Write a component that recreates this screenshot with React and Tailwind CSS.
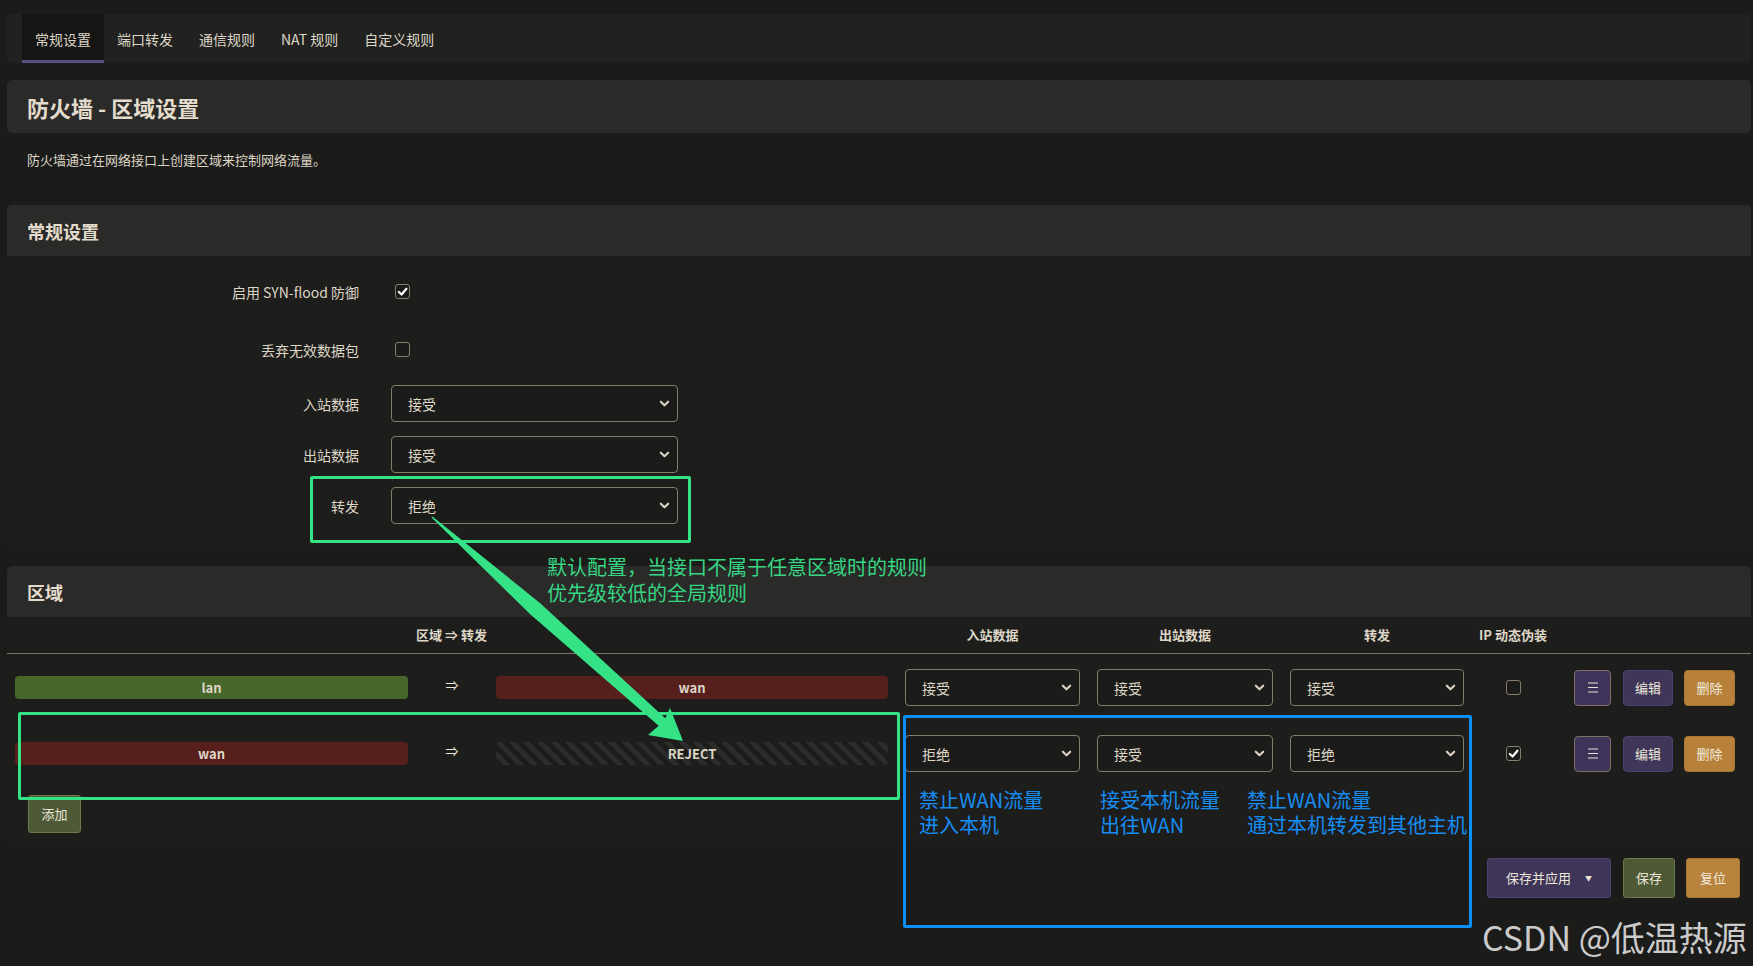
import React from "react"

const font = "font-['Noto_Sans_CJK_SC','Noto_Sans',sans-serif]"

function Chevron() {
  return (
    <svg width="11" height="11" viewBox="0 0 12 12" className="shrink-0">
      <path d="M2 4 L6 8 L10 4" fill="none" stroke="#d8d0c0" strokeWidth="2.4" strokeLinecap="round" strokeLinejoin="round" />
    </svg>
  )
}

function Select({ value, className = "" }) {
  return (
    <div className={`h-[37px] flex items-center justify-between pl-[16px] pr-[7px] rounded-[4px] border border-[#857b6b] bg-[#1b1b1a] text-[14px] leading-[18px] text-[#ddd6c6] ${className}`}>
      <span>{value}</span>
      <Chevron />
    </div>
  )
}

function Checkbox({ checked }) {
  return (
    <div className="w-[15px] h-[15px] rounded-[3px] border-[1.5px] border-[#887d6c] bg-[#1b1b1a] flex items-center justify-center">
      {checked && (
        <svg width="11" height="11" viewBox="0 0 12 12">
          <path d="M2 6.5 L5 9.3 L10.3 3" fill="none" stroke="#ffffff" strokeWidth="2.4" strokeLinecap="round" strokeLinejoin="round" />
        </svg>
      )}
    </div>
  )
}

function MenuIcon() {
  return (
    <svg width="12" height="11" viewBox="0 0 12 11">
      <path d="M1 1 H11 M1 5.5 H11 M1 10 H11" stroke="#e8e2d6" strokeWidth="1.2" />
    </svg>
  )
}

function ZoneRow({ src, srcColor, dest, inbound, outbound, forward, masq }) {
  return (
    <div className="h-[37px] flex items-center">
      <div className={`ml-[8px] w-[393px] h-[23px] rounded-[4px] flex items-center justify-center text-[13px] font-semibold leading-[16px] text-[#ddd6c6] ${srcColor}`}>
        {src}
      </div>
      <div className="w-[88px] text-center text-[13px] leading-[16px] text-[#ece6da] -mt-[6px]">⇒</div>
      {dest === "REJECT" ? (
        <div className="w-[392px] h-[23px] rounded-[4px] flex items-center justify-center text-[13px] font-bold leading-[16px] text-[#ddd6c6] bg-[repeating-linear-gradient(45deg,#1c1c1b_0px,#1c1c1b_5px,#2c2c2b_5px,#2c2c2b_10px)]">
          REJECT
        </div>
      ) : (
        <div className="w-[392px] h-[23px] rounded-[4px] flex items-center justify-center text-[13px] font-semibold leading-[16px] text-[#ddd6c6] bg-[#561f1c]">
          {dest}
        </div>
      )}
      <Select value={inbound} className="ml-[17px] w-[175px]" />
      <Select value={outbound} className="ml-[17px] w-[176px]" />
      <Select value={forward} className="ml-[17px] w-[174px]" />
      <div className="w-[98px] flex justify-center">
        <Checkbox checked={masq} />
      </div>
      <button className="ml-[12px] w-[37px] h-[36px] rounded-[4px] border border-[#7b7063] bg-[#3e3459] flex items-center justify-center">
        <MenuIcon />
      </button>
      <button className="ml-[12px] w-[50px] h-[36px] rounded-[4px] border border-[#4b4170] bg-[#3f3659] text-[13px] leading-[16px] text-[#ece6da]">
        编辑
      </button>
      <button className="ml-[11px] w-[51px] h-[36px] rounded-[4px] border border-[#a87535] bg-[#b7813a] text-[13px] leading-[16px] text-[#f2ebdd]">
        删除
      </button>
    </div>
  )
}

function FormRow({ label, children, className = "" }) {
  return (
    <div className={`h-[37px] flex items-center ${className}`}>
      <div className="w-[352px] text-right text-[14px] leading-[18px] text-[#ddd6c6]">{label}</div>
      <div className="ml-[32px] flex items-center">{children}</div>
    </div>
  )
}

export default function App() {
  const tabs = ["常规设置", "端口转发", "通信规则", "NAT 规则", "自定义规则"]

  return (
    <div className={`relative h-[966px] w-full overflow-hidden bg-[#1b1b1a] pl-[7px] pr-[2px] pt-[14px] ${font}`}>
      {/* Tabs */}
      <div className="h-[49px] rounded-[5px] bg-[#212120] flex pl-[15px]">
        {tabs.map((t, i) => (
          <div
            key={t}
            className={`px-[13px] flex items-center text-[14px] leading-[18px] text-[#ddd6c6] ${i === 0 ? "bg-[#151514] border-b-[3px] border-[#5a4f80] pt-[3px]" : ""}`}
          >
            {t}
          </div>
        ))}
      </div>

      {/* Title */}
      <div className="mt-[17px] h-[53px] rounded-[5px] bg-[#2a2a29] px-[20px] flex items-center text-[22px] font-bold leading-[26px] text-[#e3dccc]">
        防火墙 - 区域设置
      </div>
      <div className="h-[72px] px-[20px] pt-[18px] text-[13px] leading-[18px] text-[#ddd6c6]">
        防火墙通过在网络接口上创建区域来控制网络流量。
      </div>

      {/* General settings */}
      <div className="h-[51px] rounded-t-[5px] bg-[#2a2a29] px-[20px] flex items-center text-[18px] font-bold leading-[22px] text-[#e3dccc]">
        常规设置
      </div>
      <div className="h-[290px] rounded-b-[5px] bg-[#1d1d1c] pt-[17px]">
        <FormRow label="启用 SYN-flood 防御">
          <div className="ml-[4px]"><Checkbox checked /></div>
        </FormRow>
        <FormRow label="丢弃无效数据包" className="mt-[21px]">
          <div className="ml-[4px]"><Checkbox /></div>
        </FormRow>
        <FormRow label="入站数据" className="mt-[17px]">
          <Select value="接受" className="w-[287px]" />
        </FormRow>
        <FormRow label="出站数据" className="mt-[14px]">
          <Select value="接受" className="w-[287px]" />
        </FormRow>
        <FormRow label="转发" className="mt-[14px]">
          <Select value="拒绝" className="w-[287px]" />
        </FormRow>
      </div>

      {/* Zones */}
      <div className="mt-[20px] h-[51px] rounded-t-[5px] bg-[#2a2a29] px-[20px] flex items-center text-[18px] font-bold leading-[22px] text-[#e3dccc]">
        区域
      </div>
      <div className="h-[225px] rounded-b-[5px] bg-[#1d1d1c]">
        <div className="h-[37px] border-b border-[#7d7262] flex items-center text-[13px] font-bold leading-[16px] text-[#ddd6c6]">
          <div className="ml-[8px] w-[873px] text-center">区域 ⇒ 转发</div>
          <div className="ml-[17px] w-[175px] text-center">入站数据</div>
          <div className="ml-[17px] w-[176px] text-center">出站数据</div>
          <div className="ml-[17px] w-[174px] text-center">转发</div>
          <div className="w-[98px] text-center">IP 动态伪装</div>
        </div>
        <div className="mt-[15px]">
          <ZoneRow src="lan" srcColor="bg-[#47662a]" dest="wan" inbound="接受" outbound="接受" forward="接受" masq={false} />
        </div>
        <div className="mt-[29px]">
          <ZoneRow src="wan" srcColor="bg-[#561f1c]" dest="REJECT" inbound="拒绝" outbound="接受" forward="拒绝" masq />
        </div>
        <button className="mt-[23px] ml-[21px] w-[53px] h-[38px] rounded-[3px] border border-[#6d7a4a] bg-[#4e5a36] text-[13px] leading-[16px] text-[#ece6da]">
          添加
        </button>
      </div>

      {/* Page actions */}
      <div className="mt-[16px] h-[40px] flex justify-end pr-[11px]">
        <button className="w-[124px] h-[40px] rounded-[3px] border border-[#4c4270] bg-[#3e3558] flex items-center justify-center gap-[14px] text-[13px] leading-[16px] text-[#ece6da]">
          保存并应用
          <span className="text-[7px] leading-[8px]">▼</span>
        </button>
        <button className="ml-[12px] w-[52px] h-[40px] rounded-[3px] border border-[#6a7a48] bg-[#4d5a35] text-[13px] leading-[16px] text-[#ece6da]">
          保存
        </button>
        <button className="ml-[11px] w-[54px] h-[40px] rounded-[3px] border border-[#a87535] bg-[#b8833c] text-[13px] leading-[16px] text-[#f2ebdd]">
          复位
        </button>
      </div>

      {/* Annotations */}
      <div className="absolute left-[310px] top-[476px] w-[381px] h-[67px] border-[3px] border-[#35e285] rounded-[2px]" />
      <div className="absolute left-[18px] top-[712px] w-[882px] h-[88px] border-[3px] border-[#35e285] rounded-[2px]" />
      <div className="absolute left-[903px] top-[715px] w-[569px] h-[213px] border-[3px] border-[#0b8ef5] rounded-[2px]" />

      <svg className="absolute left-0 top-0 pointer-events-none" width="1753" height="966">
        <polygon
          points="432.5,516.5 540.5,603.4 665.3,718.3 670,708 683,741 648,735 658.7,725.7 530.5,614.6 431.5,517.5"
          fill="#35e285"
        />
      </svg>

      <div className="absolute left-[547px] top-[554px] text-[20px] leading-[26px] text-[#37d682]">
        <div>默认配置，当接口不属于任意区域时的规则</div>
        <div>优先级较低的全局规则</div>
      </div>

      <div className="absolute left-[919px] top-[787px] text-[20px] leading-[25px] text-[#168df2]">
        <div>禁止WAN流量</div>
        <div>进入本机</div>
      </div>
      <div className="absolute left-[1100px] top-[787px] text-[20px] leading-[25px] text-[#168df2]">
        <div>接受本机流量</div>
        <div>出往WAN</div>
      </div>
      <div className="absolute left-[1247px] top-[787px] text-[20px] leading-[25px] text-[#168df2]">
        <div>禁止WAN流量</div>
        <div>通过本机转发到其他主机</div>
      </div>

      <div className="absolute left-[1482px] top-[915px] text-[34px] leading-[44px] text-[#cbcbcb]">
        CSDN @低温热源
      </div>
    </div>
  )
}
